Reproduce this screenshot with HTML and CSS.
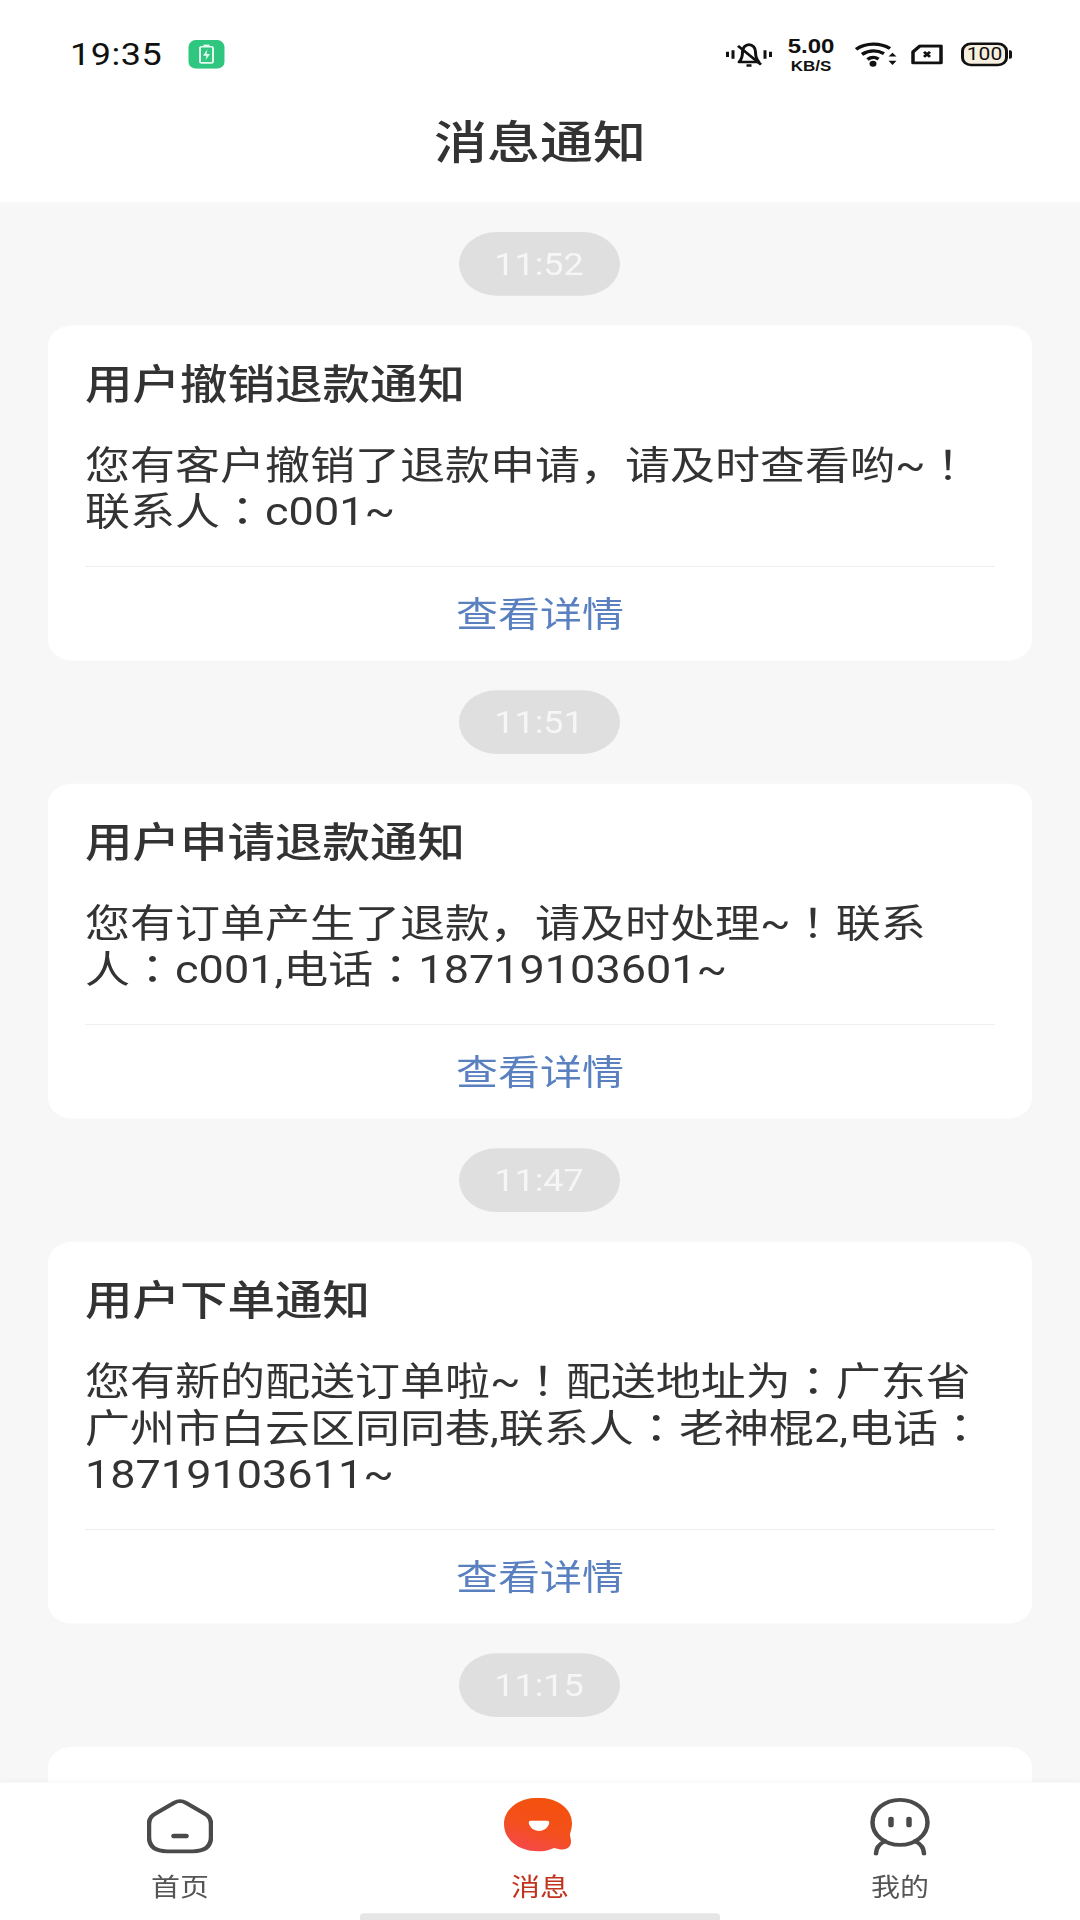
FILE: index.html
```html
<!DOCTYPE html>
<html lang="zh-CN">

<head>
  <meta charset="UTF-8">
  <meta name="viewport" content="width=device-width, initial-scale=1.0">
  <title>消息通知</title>
  <link rel="stylesheet" href="styles.css">
</head>

<body>
  <div class="app">
    <header class="header">
      <div class="status-bar">
        <div class="status-left">
          <span class="clock">19:35</span>
          <svg class="charge-icon" viewBox="0 0 36 34">
            <rect width="36" height="34" rx="8" fill="#2fc77f" />
            <rect x="11.5" y="8" width="13" height="19" rx="1.5" fill="none" stroke="#e8fbf1" stroke-width="2" />
            <rect x="15" y="5.5" width="6" height="2.5" fill="#e8fbf1" />
            <path d="M19 11 L14.5 18.500 H18 L17 24 L21.500 16.500 H18 Z" fill="#e8fbf1" />
          </svg>
        </div>
        <div class="status-right">
          <svg class="bell-icon" viewBox="0 0 46 30">
            <path d="M1.500 12 V18 M7 10 V20 M39 10 V20 M44.500 12 V18" stroke="#111" stroke-width="3" fill="none" />
            <path d="M13 24 C16 21 16.500 16 16.500 12 C16.500 7 19.500 3.500 23 3.500 C26.500 3.500 29.500 7 29.500 12 C29.500 16 30 21 33 24 Z" stroke="#111" stroke-width="3" fill="none" stroke-linejoin="round" />
            <path d="M20.500 28 H25.500 M12 5 L35 27" stroke="#111" stroke-width="3" fill="none" />
          </svg>
          <div class="speed">
            <span class="speed-num">5.00</span>
            <span class="speed-unit">KB/S</span>
          </div>
          <svg class="wifi-icon" viewBox="0 0 42 30">
            <path d="M1 9 C11 1 25 1 35 8 M7 15 C14 10 22 10 29 14 M12.500 21 C16 18 20 18 23.500 20.500" stroke="#111" stroke-width="3.800" fill="none" />
            <circle cx="18" cy="26" r="3.500" fill="#111" />
            <path d="M33.500 17.500 L37.500 13 L41.500 17.500 Z M33.500 22.500 L37.500 27.500 L41.500 22.500 Z" fill="#111" />
          </svg>
          <svg class="sim-icon" viewBox="0 0 32 24">
            <path d="M9 2 H30 V22 H2 V9 Z" stroke="#111" stroke-width="3.500" fill="none" stroke-linejoin="round" />
            <path d="M13 9 L19 15 M19 9 L13 15" stroke="#111" stroke-width="3" />
          </svg>
          <div class="battery">
            <span class="battery-level">100</span>
          </div>
        </div>
      </div>
      <h1 class="page-title">消息通知</h1>
    </header>

    <main class="feed">
      <span class="time-pill">11:52</span>
      <section class="card">
        <h2 class="card-title">用户撤销退款通知</h2>
        <p class="card-text">您有客户撤销了退款申请，请及时查看哟~<span lang="zh-TW">！</span><br>联系人<span lang="zh-TW">：</span>c001~</p>
        <a class="card-link">查看详情</a>
      </section>

      <span class="time-pill">11:51</span>
      <section class="card">
        <h2 class="card-title">用户申请退款通知</h2>
        <p class="card-text">您有订单产生了退款，请及时处理~<span lang="zh-TW">！</span>联系<br>人<span lang="zh-TW">：</span>c001,电话<span lang="zh-TW">：</span>18719103601~</p>
        <a class="card-link">查看详情</a>
      </section>

      <span class="time-pill">11:47</span>
      <section class="card">
        <h2 class="card-title">用户下单通知</h2>
        <p class="card-text">您有新的配送订单啦~<span lang="zh-TW">！</span>配送地址为<span lang="zh-TW">：</span>广东省<br>广州市白云区同同巷,联系人<span lang="zh-TW">：</span>老神棍2,电话<span lang="zh-TW">：</span><br>18719103611~</p>
        <a class="card-link">查看详情</a>
      </section>

      <span class="time-pill">11:15</span>
      <section class="card card-next"></section>
    </main>

    <nav class="tabbar">
      <div class="tab">
        <svg class="tab-icon home-icon" viewBox="0 0 66 64">
          <path d="M27 4 Q33 0 39 4 L58 17 Q64 21 64 29 V44 Q64 61 46 61 H20 Q2 61 2 44 V29 Q2 21 8 17 Z" fill="none" stroke="#4a4a4a" stroke-width="4.500" />
          <path d="M27 43 H39" stroke="#4a4a4a" stroke-width="5.500" stroke-linecap="round" />
        </svg>
        <span class="tab-label">首页</span>
      </div>
      <div class="tab tab-active">
        <svg class="tab-icon msg-icon" viewBox="0 0 69 64" preserveAspectRatio="xMidYMin">
          <defs>
            <linearGradient id="msgFill" x1="0.700" y1="0" x2="0.300" y2="1">
              <stop offset="0" stop-color="#f4500c" />
              <stop offset="0.550" stop-color="#f3501c" />
              <stop offset="1" stop-color="#f4484c" />
            </linearGradient>
          </defs>
          <path d="M34 0 C55 0 68 14 68 30 C68 37 66 41 66 44 C67 50 68 54 65 58 C62 62 56 61 50 59 C45 62 39 63 34 63 C14 63 0 49 0 31 C0 14 14 0 34 0 Z" fill="url(#msgFill)" />
          <path d="M27 27 H43 Q46 27 45 31 C43 37 39 39 35 39 C31 39 27 37 25 31 Q24 27 27 27 Z" fill="#fff" />
        </svg>
        <span class="tab-label">消息</span>
      </div>
      <div class="tab">
        <svg class="tab-icon me-icon" viewBox="0 0 60 68">
          <ellipse cx="30" cy="29" rx="27.500" ry="26.500" fill="none" stroke="#4a4a4a" stroke-width="4.500" />
          <path d="M21 25 V32 M39 25 V32" stroke="#4a4a4a" stroke-width="5.500" stroke-linecap="round" />
          <path d="M6 66 Q6 56 15 51 M54 66 Q54 56 45 51" fill="none" stroke="#4a4a4a" stroke-width="4.500" stroke-linecap="round" />
        </svg>
        <span class="tab-label">我的</span>
      </div>
      <div class="home-bar"></div>
    </nav>
  </div>
</body>

</html>
```

FILE: styles.css
```css
html,
body {
  margin: 0;
  height: 1920px;
  overflow: hidden;
  background: #f7f7f7;
}

/* the capture is squashed vertically, so everything is laid out taller and scaled */
.app {
  position: relative;
  display: flex;
  flex-direction: column;
  width: 1080px;
  height: 2259px;
  transform: scaleY(0.85);
  transform-origin: 0 0;
  font-family: Roboto, "Noto Sans CJK SC", sans-serif;
  color: #333;
}

.header {
  flex: none;
  height: 238px;
  background: #fff;
}

.status-bar {
  display: flex;
  align-items: center;
  justify-content: space-between;
  height: 68px;
  padding: 30px 69px 0 70px;
}

.status-left {
  display: flex;
  align-items: center;
  gap: 26px;
}

.clock {
  font-size: 36px;
  line-height: 40px;
  letter-spacing: 0.5px;
  color: #111;
}

.charge-icon {
  width: 37px;
  height: 34px;
}

.status-right {
  display: flex;
  align-items: center;
}

.bell-icon {
  width: 48px;
  height: 30px;
  margin-right: 14px;
}

.speed {
  display: flex;
  flex-direction: column;
  align-items: center;
  width: 48px;
  margin-right: 20px;
  color: #111;
  font-family: "Liberation Sans", sans-serif;
  font-weight: 700;
}

.speed-num {
  font-size: 24px;
  line-height: 28px;
}

.speed-unit {
  font-size: 17px;
  line-height: 20px;
}

.wifi-icon {
  width: 42px;
  height: 30px;
  margin-right: 14px;
}

.sim-icon {
  width: 32px;
  height: 24px;
  margin-right: 18px;
}

.battery {
  position: relative;
  display: flex;
  align-items: center;
  justify-content: center;
  box-sizing: border-box;
  width: 47px;
  height: 28px;
  margin-right: 3px;
  border: 3px solid #111;
  border-radius: 10px;
  background: #f6efdf;
}

.battery::after {
  content: '';
  position: absolute;
  right: -7px;
  top: 6px;
  width: 3px;
  height: 10px;
  background: #111;
  border-radius: 0 2px 2px 0;
}

.battery-level {
  font-size: 21px;
  line-height: 22px;
  color: #111;
}

.page-title {
  margin: 0;
  height: 140px;
  line-height: 142px;
  text-align: center;
  font-size: 53px;
  font-weight: 500;
  color: #333;
}

.feed {
  flex: 1;
  display: flex;
  flex-direction: column;
  align-items: center;
  gap: 35px;
  padding-top: 35px;
  overflow: hidden;
}

.time-pill {
  flex: none;
  width: 161px;
  height: 75px;
  margin-right: 2px;
  line-height: 77px;
  border-radius: 38px;
  text-align: center;
  background: #dfdfdf;
  color: #f6f6f6;
  font-size: 36px;
}

.card {
  flex: none;
  box-sizing: border-box;
  width: 984px;
  padding: 40px 37px 0;
  border-radius: 24px;
  background: #fff;
}

.card-next {
  height: 200px;
}

.card-title {
  margin: 0;
  font-size: 47.500px;
  line-height: 60px;
  font-weight: 500;
  color: #333;
}

.card-text {
  margin: 37px 0 36px;
  font-size: 45px;
  line-height: 55px;
  color: #333;
  white-space: nowrap;
}

.card-link {
  display: block;
  box-sizing: border-box;
  height: 111px;
  padding-top: 3px;
  line-height: 107px;
  border-top: 1px solid #ececec;
  text-align: center;
  font-size: 42px;
  color: #5a80c0;
}

.tabbar {
  position: relative;
  flex: none;
  display: flex;
  height: 162px;
  background: #fff;
  box-shadow: 0 -2px 6px rgba(0, 0, 0, 0.03);
}

.tab {
  flex: 1;
  display: flex;
  flex-direction: column;
  align-items: center;
  padding-top: 18px;
  color: #555;
}

.tab-active {
  color: #c0341d;
}

.tab-icon {
  display: block;
  height: 68px;
  margin-bottom: 17px;
}

.home-icon {
  width: 66px;
}

.msg-icon {
  width: 69px;
  margin-left: -3px;
}

.me-icon {
  width: 60px;
}

.tab-label {
  font-size: 29px;
  line-height: 40px;
}

.home-bar {
  position: absolute;
  left: 360px;
  bottom: 0;
  width: 360px;
  height: 8px;
  border-radius: 4px 4px 0 0;
  background: #e6e6e6;
}
```
